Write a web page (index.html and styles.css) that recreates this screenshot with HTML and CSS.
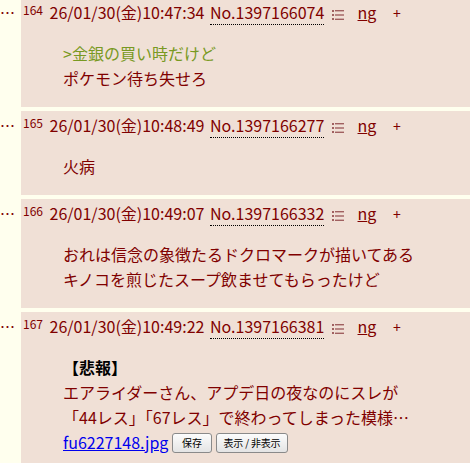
FILE: index.html
```html
<!DOCTYPE html>
<html lang="ja">
<head>
    <meta charset="utf-8">
    <title>スレッド</title>
    <link rel="stylesheet" href="styles.css">
</head>
<body>
    <div class="thread">
        <div class="res">
            <div class="rts">…</div>
            <div class="rtd">
                <div class="head">
                    <span class="cno">164</span>
                    <span class="cnw">26/01/30(金)10:47:34</span>
                    <span class="cnm">No.1397166074</span>
                    <span class="menu"><svg width="12" height="10" viewBox="0 0 12 10"><rect x="0" y="0" width="2" height="2"/><rect x="0" y="4" width="2" height="2"/><rect x="0" y="8" width="2" height="2"/><rect x="3" y="0" width="9" height="1.4"/><rect x="3" y="4.3" width="9" height="1.4"/><rect x="3" y="8.6" width="9" height="1.4"/></svg></span>
                    <span class="ng"><u>n</u>g</span>
                    <span class="plus">+</span>
                </div>
                <blockquote>
                    <span class="quote">&gt;金銀の買い時だけど</span><br>
                    ポケモン待ち失せろ
                </blockquote>
            </div>
        </div>
        <div class="res">
            <div class="rts">…</div>
            <div class="rtd">
                <div class="head">
                    <span class="cno">165</span>
                    <span class="cnw">26/01/30(金)10:48:49</span>
                    <span class="cnm">No.1397166277</span>
                    <span class="menu"><svg width="12" height="10" viewBox="0 0 12 10"><rect x="0" y="0" width="2" height="2"/><rect x="0" y="4" width="2" height="2"/><rect x="0" y="8" width="2" height="2"/><rect x="3" y="0" width="9" height="1.4"/><rect x="3" y="4.3" width="9" height="1.4"/><rect x="3" y="8.6" width="9" height="1.4"/></svg></span>
                    <span class="ng"><u>n</u>g</span>
                    <span class="plus">+</span>
                </div>
                <blockquote>
                    火病
                </blockquote>
            </div>
        </div>
        <div class="res">
            <div class="rts">…</div>
            <div class="rtd">
                <div class="head">
                    <span class="cno">166</span>
                    <span class="cnw">26/01/30(金)10:49:07</span>
                    <span class="cnm">No.1397166332</span>
                    <span class="menu"><svg width="12" height="10" viewBox="0 0 12 10"><rect x="0" y="0" width="2" height="2"/><rect x="0" y="4" width="2" height="2"/><rect x="0" y="8" width="2" height="2"/><rect x="3" y="0" width="9" height="1.4"/><rect x="3" y="4.3" width="9" height="1.4"/><rect x="3" y="8.6" width="9" height="1.4"/></svg></span>
                    <span class="ng"><u>n</u>g</span>
                    <span class="plus">+</span>
                </div>
                <blockquote>
                    おれは信念の象徴たるドクロマークが描いてある<br>
                    キノコを煎じたスープ飲ませてもらったけど
                </blockquote>
            </div>
        </div>
        <div class="res">
            <div class="rts">…</div>
            <div class="rtd">
                <div class="head">
                    <span class="cno">167</span>
                    <span class="cnw">26/01/30(金)10:49:22</span>
                    <span class="cnm">No.1397166381</span>
                    <span class="menu"><svg width="12" height="10" viewBox="0 0 12 10"><rect x="0" y="0" width="2" height="2"/><rect x="0" y="4" width="2" height="2"/><rect x="0" y="8" width="2" height="2"/><rect x="3" y="0" width="9" height="1.4"/><rect x="3" y="4.3" width="9" height="1.4"/><rect x="3" y="8.6" width="9" height="1.4"/></svg></span>
                    <span class="ng"><u>n</u>g</span>
                    <span class="plus">+</span>
                </div>
                <blockquote>
                    <b class="title">【悲報】</b><br>
                    エアライダーさん、アプデ日の夜なのにスレが<br>
                    「44レス」「67レス」で終わってしまった模様…<br>
                    <a href="#" class="file">fu6227148.jpg</a>
                    <button class="btn">保存</button>
                    <button class="btn btn-toggle">表示 / 非表示</button>
                </blockquote>
            </div>
        </div>
    </div>
</body>
</html>
```

FILE: styles.css
```css
/* futaba-like thread replies */
body {
    margin: 0;
    background-color: #ffffee;
    color: #800000;
    font-family: "Noto Sans CJK JP", sans-serif;
    font-size: 16px;
    overflow: hidden;
}

.thread { margin-top: -2px; }

.res { display: flex; margin-bottom: 4px; }
.rts { width: 21px; flex: none; height: 25px; line-height: 25px; padding-top: 2px; color: #800000; font-size: 15px; }
.rtd { flex: 1; background-color: #f0e0d6; padding: 2px; }

.head { height: 25px; line-height: 25px; white-space: nowrap; }
.head span { line-height: 1; }
.cno { font-size: 12px; vertical-align: 4px; }
.cnw { margin-left: 3px; }
.cnm { margin-left: 2px; border-bottom: 1px dotted #000; }
.menu { display: inline-block; margin-left: 4px; }
.menu svg { fill: #a06060; vertical-align: -1px; }
.ng { margin-left: 10px; }
.ng u { text-decoration-thickness: 1px; }
.plus { margin-left: 13px; font-size: 14px; }

blockquote { margin: 16px 0 14px 40px; line-height: 25px; }
.quote { color: #789922; }
.title { color: #000; }
.file { color: #0000ee; }

.btn {
    font-family: "Noto Sans CJK JP", sans-serif;
    font-size: 10px;
    line-height: 1;
    height: 20px;
    padding: 0 9px;
    border: 1px solid #8a8a8a;
    border-radius: 3px;
    background: linear-gradient(#fcfcfc, #e4e4e4);
    color: #000;
    vertical-align: 2px;
}
.btn-toggle { padding: 0 7px; letter-spacing: -0.2px; }
```
